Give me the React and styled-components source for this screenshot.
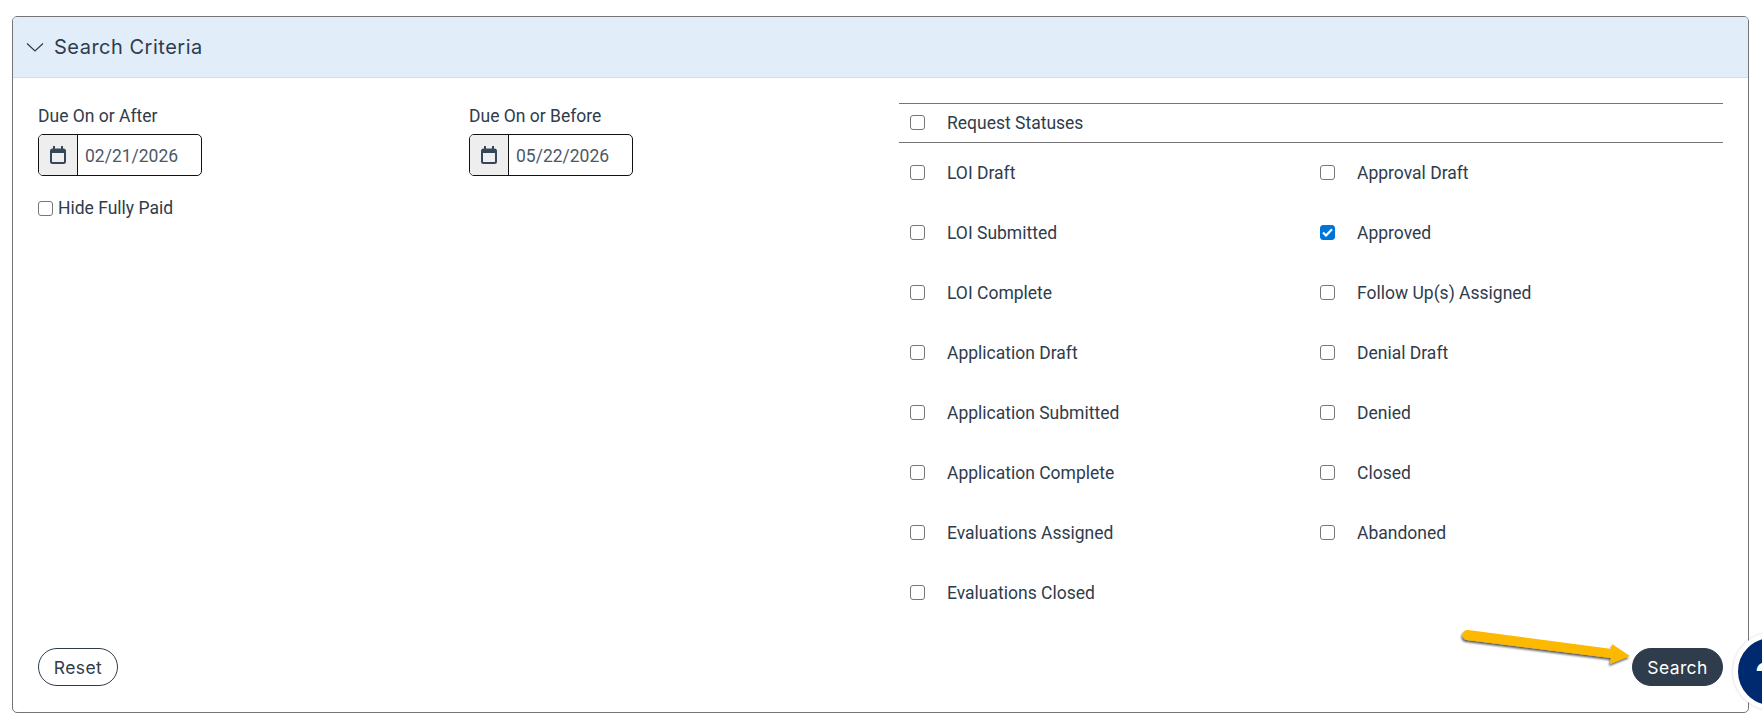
import React from "react";
import styled, { createGlobalStyle } from "styled-components";

const GlobalStyle = createGlobalStyle`
  html, body {
    margin: 0;
    padding: 0;
    background: #fff;
  }
  body {
    font-family: Roboto, "Liberation Sans", sans-serif;
    color: #2f3c4c;
  }
`;

const Page = styled.div`
  position: relative;
  width: 1762px;
  height: 724px;
  overflow: hidden;
  padding: 16px 13px 11px 12px;
  box-sizing: border-box;
`;

const Panel = styled.section`
  height: 100%;
  box-sizing: border-box;
  border: 1px solid #757575;
  border-radius: 5px;
  display: flex;
  flex-direction: column;
  overflow: hidden;
`;

const PanelHeader = styled.header`
  height: 61px;
  flex-shrink: 0;
  background: #e1edf9;
  border-bottom: 1px solid #d5dde6;
  display: flex;
  align-items: center;
  gap: 10px;
  padding-left: 13px;
  box-sizing: border-box;
`;

const PanelTitle = styled.h2`
  margin: 0;
  font-family: Inter, sans-serif;
  font-size: 20px;
  font-weight: 400;
  letter-spacing: 0.5px;
  color: #2f3c4c;
`;

const PanelBody = styled.div`
  flex: 1;
  display: flex;
  flex-direction: column;
  justify-content: space-between;
  padding: 25px 25px 26px 25px;
`;

const Columns = styled.div`
  display: flex;
`;

const DateColumns = styled.div`
  width: 861px;
  flex-shrink: 0;
  padding-top: 3px;
`;

const DateRow = styled.div`
  display: grid;
  grid-template-columns: 431px 1fr;
`;

const FieldLabel = styled.label`
  display: block;
  font-size: 17.5px;
  line-height: 20px;
  margin-bottom: 8px;
`;

const DateInput = styled.div`
  width: 164px;
  height: 42px;
  box-sizing: border-box;
  border: 1px solid #111;
  border-radius: 5px;
  display: flex;
  overflow: hidden;
`;

const DateAddon = styled.span`
  width: 38px;
  flex-shrink: 0;
  background: #eeeeee;
  border-right: 1px solid #111;
  display: flex;
  align-items: center;
  justify-content: center;
`;

const DateValue = styled.span`
  font-size: 17.5px;
  color: #4d5865;
  align-self: center;
  padding: 1px 0 0 7px;
`;

const Box = styled.span`
  width: 15px;
  height: 15px;
  box-sizing: border-box;
  flex-shrink: 0;
  border-radius: 3px;
  border: 1px solid ${(p) => (p.$checked ? "#0075d9" : "#767676")};
  background: ${(p) => (p.$checked ? "#0075d9" : "#fff")};
  display: flex;
  align-items: center;
  justify-content: center;
`;

const InlineCheck = styled.label`
  display: flex;
  align-items: center;
  gap: 5px;
  font-size: 17.5px;
  line-height: 20px;
  margin-top: 22px;
`;

const Statuses = styled.div`
  flex: 1;
`;

const StatusHeader = styled.div`
  height: 40px;
  box-sizing: border-box;
  border-top: 1px solid #757575;
  border-bottom: 1px solid #757575;
  display: flex;
  align-items: center;
  padding-left: 11px;
  gap: 22px;
  font-size: 17.5px;
  line-height: 34px;

  ${Box} {
    margin-bottom: 1px;
  }
`;

const StatusGrid = styled.div`
  display: grid;
  grid-template-columns: 410px 1fr;
  grid-auto-rows: 60px;
`;

const StatusItem = styled.label`
  display: flex;
  align-items: center;
  padding-left: 11px;
  gap: 22px;
  font-size: 17.5px;

  ${Box} {
    margin-bottom: 2px;
  }
`;

const Actions = styled.div`
  display: flex;
  justify-content: space-between;
  align-items: center;
`;

const PillButton = styled.button`
  height: 38px;
  box-sizing: border-box;
  border-radius: 19px;
  border: 1px solid #2f3c4c;
  background: ${(p) => (p.$primary ? "#2f3c4c" : "#fff")};
  color: ${(p) => (p.$primary ? "#fff" : "#2f3c4c")};
  font-family: Inter, sans-serif;
  font-size: 17.5px;
  letter-spacing: 0.4px;
  padding: 0;
  width: ${(p) => (p.$primary ? "91px" : "80px")};
`;

const HelpBubble = styled.div`
  position: absolute;
  left: 1733px;
  top: 633px;
  width: 77px;
  height: 77px;
  box-sizing: border-box;
  border-radius: 50%;
  background: #002a70;
  border: 5px solid #fff;
  box-shadow: 0 0 3px rgba(0, 0, 0, 0.2);
  color: #fff;
  font-family: Inter, sans-serif;
  font-weight: 700;
  font-size: 44px;
  line-height: 80px;
  padding-left: 17px;
`;

const Arrow = styled.svg`
  position: absolute;
  left: 1455px;
  top: 620px;
`;

const Chevron = () => (
  <svg width="18" height="18" viewBox="0 0 18 18" fill="none" stroke="#2f3c4c" strokeWidth="1.2">
    <path d="M1 5.5 L9 13 L17 5.5" />
  </svg>
);

const CalendarIcon = () => (
  <svg width="16" height="18" viewBox="0 0 16 18" fill="none" stroke="#36465a">
    <rect x="1" y="3.5" width="14" height="13.5" rx="1.5" strokeWidth="2" />
    <path d="M1 5.5 H15" strokeWidth="3" />
    <path d="M4 0 V3.5 M12 0 V3.5" strokeWidth="2" />
  </svg>
);

const Check = () => (
  <svg width="11" height="9" viewBox="0 0 11 9" fill="none" stroke="#fff" strokeWidth="2.2">
    <path d="M1 4.5 L4 7.5 L10 1.2" />
  </svg>
);

const CheckBox = ({ checked }) => (
  <Box $checked={checked}>{checked && <Check />}</Box>
);

const statuses = [
  ["LOI Draft", "Approval Draft"],
  ["LOI Submitted", "Approved"],
  ["LOI Complete", "Follow Up(s) Assigned"],
  ["Application Draft", "Denial Draft"],
  ["Application Submitted", "Denied"],
  ["Application Complete", "Closed"],
  ["Evaluations Assigned", "Abandoned"],
  ["Evaluations Closed", null],
];

const DateField = ({ label, value }) => (
  <div>
    <FieldLabel>{label}</FieldLabel>
    <DateInput>
      <DateAddon>
        <CalendarIcon />
      </DateAddon>
      <DateValue>{value}</DateValue>
    </DateInput>
  </div>
);

export default function App() {
  return (
    <Page>
      <GlobalStyle />
      <Panel>
        <PanelHeader>
          <Chevron />
          <PanelTitle>Search Criteria</PanelTitle>
        </PanelHeader>
        <PanelBody>
          <Columns>
            <DateColumns>
              <DateRow>
                <DateField label="Due On or After" value="02/21/2026" />
                <DateField label="Due On or Before" value="05/22/2026" />
              </DateRow>
              <InlineCheck>
                <CheckBox />
                Hide Fully Paid
              </InlineCheck>
            </DateColumns>
            <Statuses>
              <StatusHeader>
                <CheckBox />
                Request Statuses
              </StatusHeader>
              <StatusGrid>
                {statuses.flat().map((name) =>
                  name ? (
                    <StatusItem key={name}>
                      <CheckBox checked={name === "Approved"} />
                      {name}
                    </StatusItem>
                  ) : null
                )}
              </StatusGrid>
            </Statuses>
          </Columns>
          <Actions>
            <PillButton>Reset</PillButton>
            <PillButton $primary>Search</PillButton>
          </Actions>
        </PanelBody>
      </Panel>
      <Arrow width="190" height="60" viewBox="0 0 190 60">
        <defs>
          <filter id="arrowShadow" x="-10%" y="-30%" width="120%" height="170%">
            <feDropShadow dx="-1" dy="2" stdDeviation="1" floodColor="#000" floodOpacity="0.65" />
          </filter>
        </defs>
        <path
          d="M13 10 L157 29 L157 24 L175 36 L155 44 L156 38 L12 20 A5 5 0 0 1 13 10 Z"
          fill="#fdb900"
          filter="url(#arrowShadow)"
        />
      </Arrow>
      <HelpBubble>?</HelpBubble>
    </Page>
  );
}
